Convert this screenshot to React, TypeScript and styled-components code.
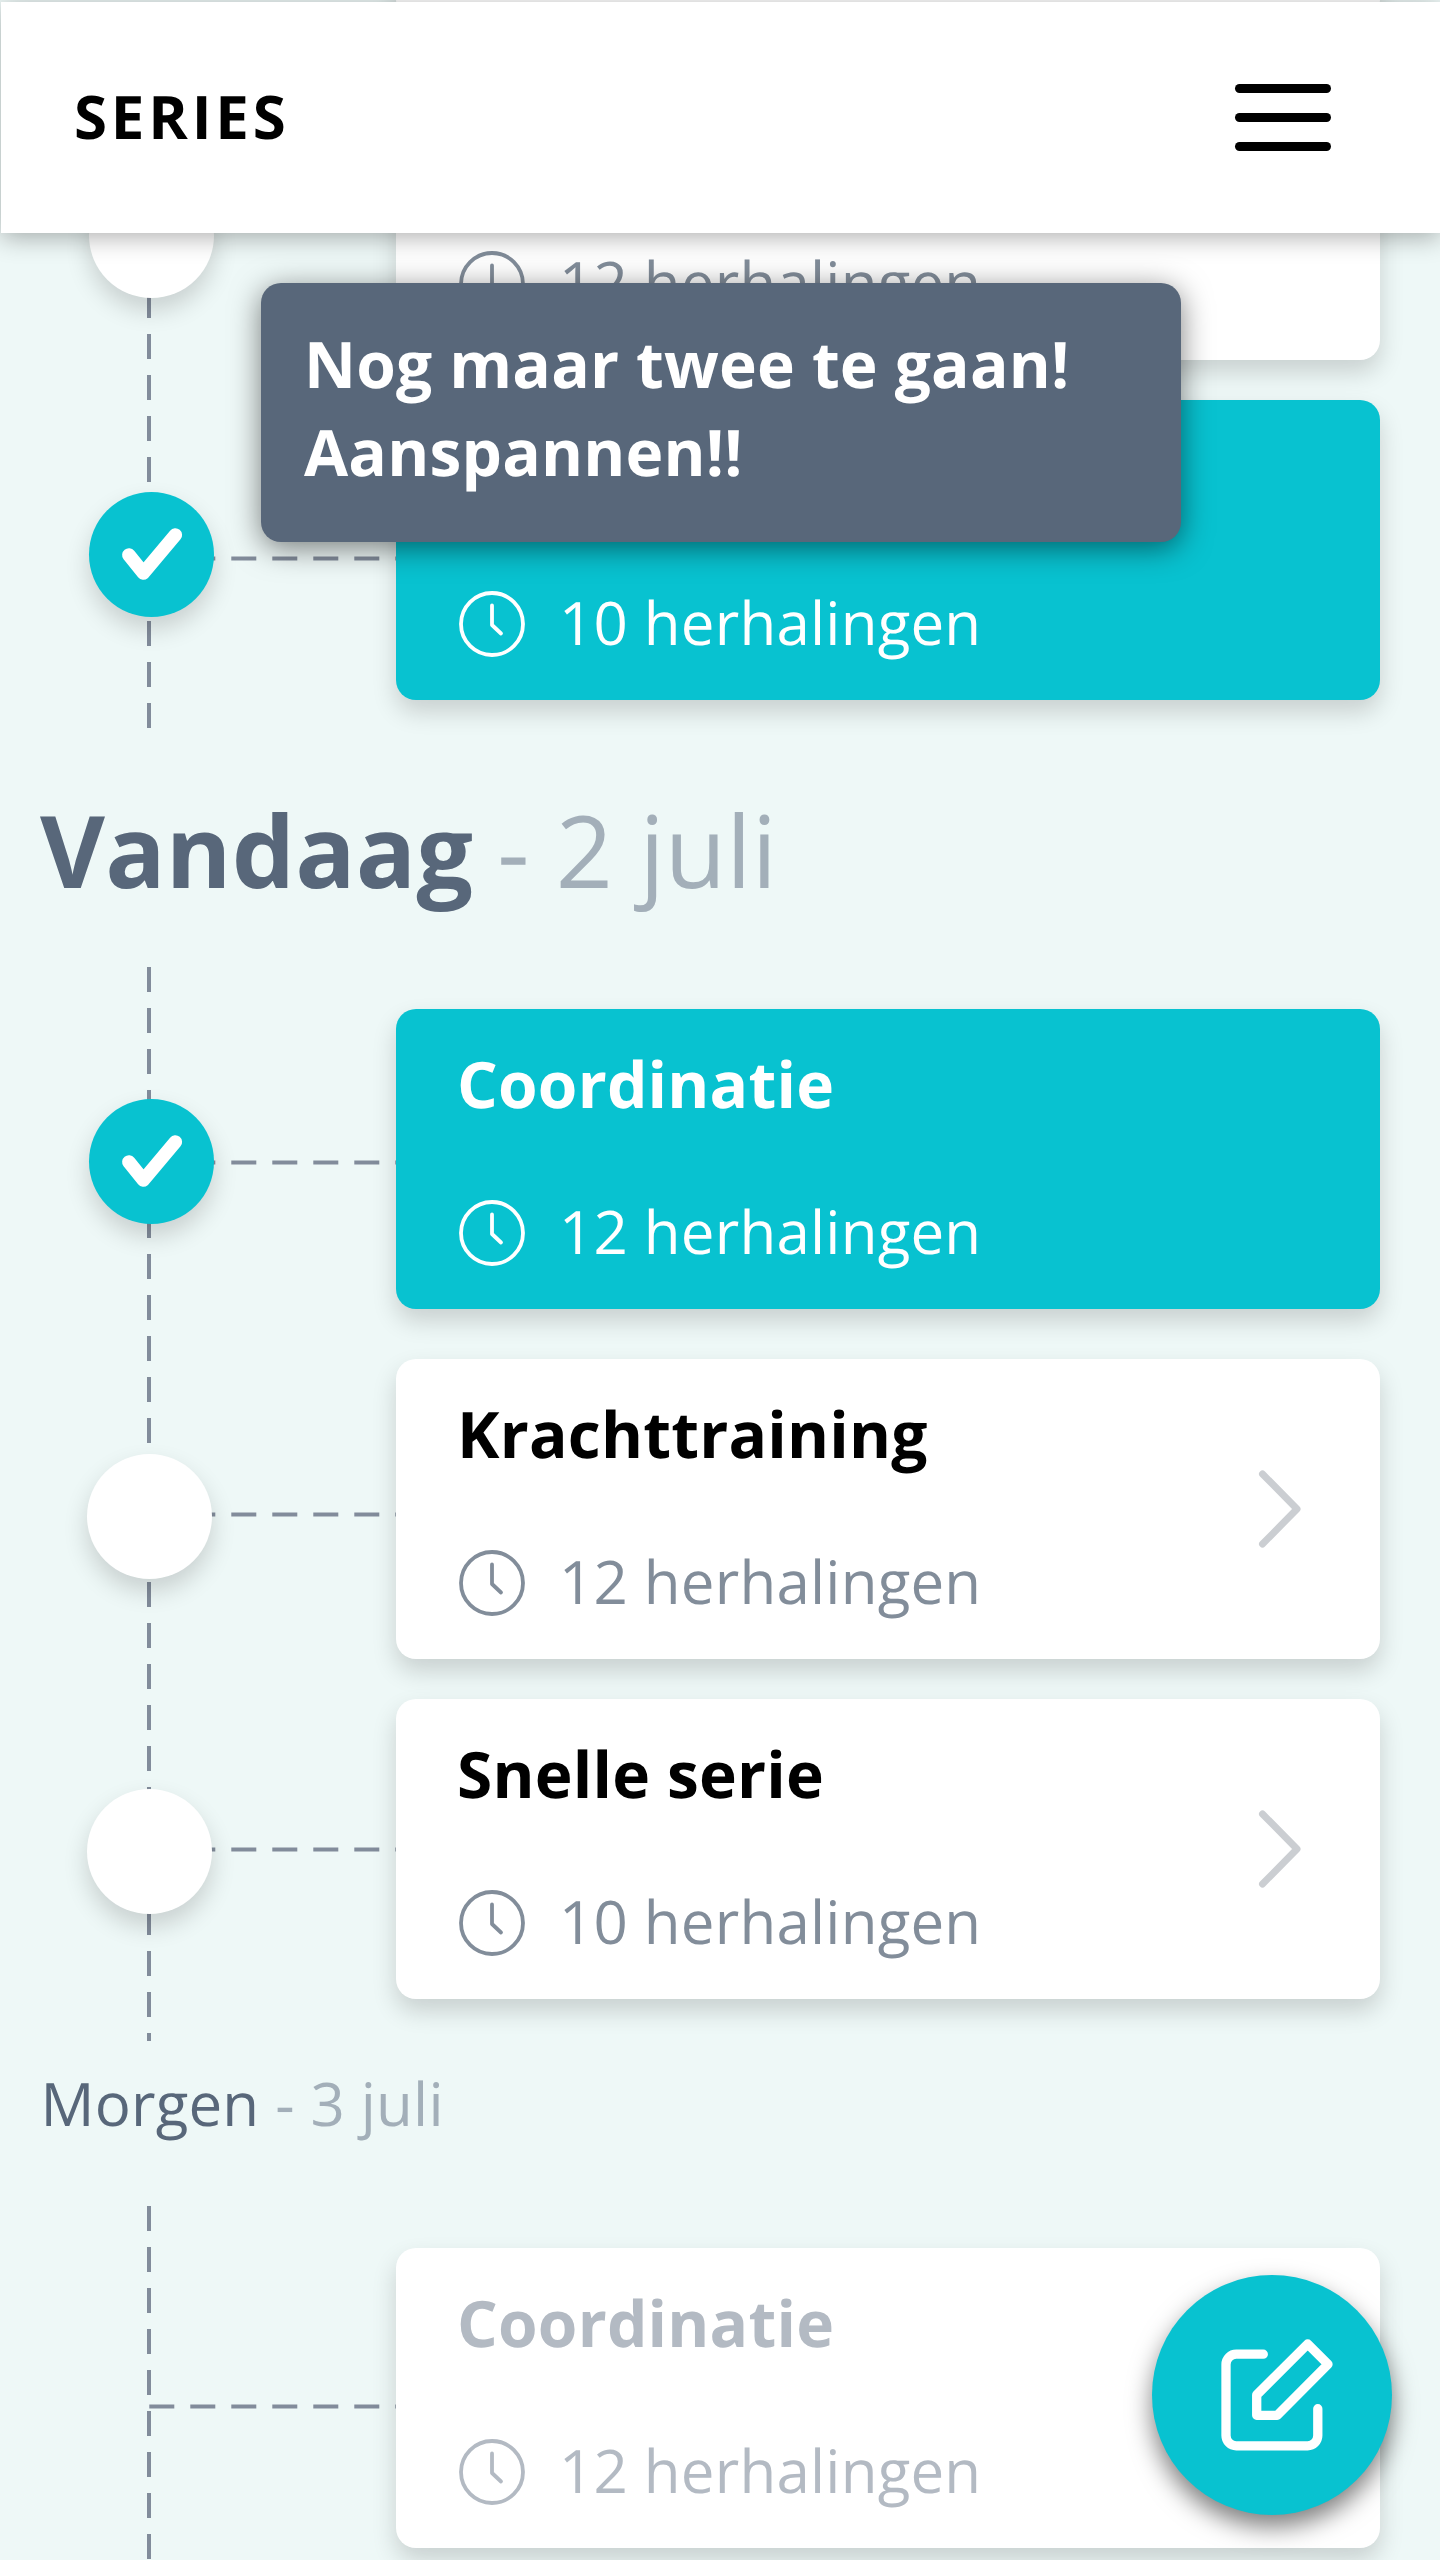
import React from "react";
import styled, { createGlobalStyle } from "styled-components";

const colors = {
  page: "#eef8f7",
  accent: "#08c2d0",
  slate: "#58677a",
  line: "#828c9b",
  text: "#828d9a",
  faded: "#b3bac3",
  date: "#a3afb9",
  chevron: "#cbced2",
};

type Tone = "done" | "open" | "future";

const GlobalStyle = createGlobalStyle`
  body {
    margin: 0;
    background: ${colors.page};
  }
`;

const Screen = styled.div`
  position: relative;
  width: 1440px;
  height: 2560px;
  overflow: hidden;
  background: ${colors.page};
  font-family: "Open Sans", "Noto Sans", sans-serif;
  letter-spacing: 0.2px;
  text-rendering: geometricPrecision;
`;

const Header = styled.header`
  position: absolute;
  z-index: 2;
  top: 2px;
  left: 1px;
  right: 0;
  box-sizing: border-box;
  height: 231px;
  padding: 0 109px 0 73px;
  display: flex;
  align-items: center;
  justify-content: space-between;
  background: #fff;
  box-shadow: 0 4px 24px rgba(0, 0, 0, 0.32);
`;

const ScreenTitle = styled.h1`
  margin: 0 0 3px;
  font-size: 60px;
  line-height: 82px;
  font-weight: 700;
  letter-spacing: 3.8px;
  color: #000;
`;

const MenuButton = styled.button`
  display: flex;
  flex-direction: column;
  gap: 19.6px;
  width: 96px;
  padding: 0;
  border: 0;
  background: none;
`;

const MenuBar = styled.span`
  height: 9.4px;
  border-radius: 5px;
  background: #000;
`;

const Toast = styled.div`
  position: absolute;
  z-index: 3;
  top: 283px;
  left: 261px;
  box-sizing: border-box;
  width: 920px;
  height: 259px;
  padding: 37px 43px;
  border-radius: 20px;
  background: ${colors.slate};
  box-shadow: 0 6px 30px rgba(0, 0, 0, 0.5);
  color: #fff;
  font-size: 64px;
  line-height: 88px;
  font-weight: 700;
`;

const Fab = styled.button`
  position: absolute;
  z-index: 3;
  top: 2275px;
  left: 1152px;
  width: 240px;
  height: 240px;
  padding: 0;
  border: 0;
  border-radius: 50%;
  background: ${colors.accent};
  box-shadow: 0 12px 24px rgba(0, 0, 0, 0.5);

  svg {
    display: block;
  }
`;

/* The list is scrolled: its first card lies mostly above the screen. */
const Schedule = styled.main`
  display: flex;
  flex-direction: column;
  margin-top: -322px;
`;

const Timeline = styled.section<{ $bottom: number }>`
  display: flex;
  flex-direction: column;
  padding: 42px 60px ${(p) => p.$bottom}px 0;
  background: repeating-linear-gradient(
      to bottom,
      ${colors.line} 0 25px,
      transparent 25px 41px
    )
    147px 0 / 4px 100% no-repeat;
`;

const DayHeading = styled.h2<{ $today?: boolean }>`
  box-sizing: border-box;
  height: ${(p) => (p.$today ? 239 : 165)}px;
  margin: 0;
  padding: ${(p) => (p.$today ? "54px 0 0 40px" : "21px 0 0 40.5px")};
  font-size: ${(p) => (p.$today ? 100 : 60)}px;
  line-height: ${(p) => (p.$today ? 136 : 82)}px;
  font-weight: ${(p) => (p.$today ? 700 : 400)};
  color: ${colors.slate};
`;

const DayDate = styled.span<{ $today?: boolean }>`
  margin-left: ${(p) => (p.$today ? -2 : 0)}px;
  font-weight: 400;
  color: ${colors.date};
`;

const Row = styled.div<{ $gap: number }>`
  display: grid;
  grid-template-columns: 396px 1fr;
  margin-top: ${(p) => p.$gap}px;
`;

const Rail = styled.div`
  position: relative;
`;

const Connector = styled.svg<{ $top: number }>`
  position: absolute;
  top: ${(p) => p.$top}px;
  left: 149px;
  display: block;
`;

const Marker = styled.div<{ $tone: Tone; $top: number; $left: number }>`
  position: relative;
  width: 125px;
  height: 125px;
  margin: ${(p) => p.$top}px 0 0 ${(p) => p.$left}px;
  border-radius: 50%;
  background: ${(p) => (p.$tone === "done" ? colors.accent : "#fff")};
  box-shadow: 0 12px 24px rgba(0, 0, 0, 0.16);

  svg {
    display: block;
  }
`;

const Card = styled.article<{ $tone: Tone }>`
  position: relative;
  box-sizing: border-box;
  height: 300px;
  padding: 31px 79px 0 60px;
  display: grid;
  grid-template-columns: 1fr auto;
  align-content: start;
  border-radius: 20px;
  background: ${(p) => (p.$tone === "done" ? colors.accent : "#fff")};
  box-shadow: 0 12px 24px rgba(0, 0, 0, 0.16);
  color: ${(p) =>
    p.$tone === "done" ? "#fff" : p.$tone === "future" ? colors.faded : colors.text};
`;

const CardBody = styled.div`
  display: flex;
  flex-direction: column;
  gap: 63px;
`;

const CardTitle = styled.h3<{ $tone: Tone }>`
  height: 87px;
  margin: 0 0 0 1px;
  font-size: 64px;
  line-height: 87px;
  font-weight: 700;
  color: ${(p) => (p.$tone === "open" ? "#000" : "inherit")};
`;

const Repeats = styled.div`
  display: flex;
  align-items: center;
  gap: 34px;
  padding-left: 3px;
  font-size: 60px;
  line-height: 82px;

  svg {
    display: block;
    margin-top: 4px;
  }
`;

const ChevronSlot = styled.div`
  padding-top: 79px;

  svg {
    display: block;
  }
`;

const CheckIcon = () => (
  <svg width="125" height="125" viewBox="0 0 125 125" fill="none">
    <path
      d="M39.9 63 L54.4 81 L86.3 43"
      stroke="#fff"
      strokeWidth="13.6"
      strokeLinecap="round"
      strokeLinejoin="round"
    />
  </svg>
);

const ClockIcon = () => (
  <svg
    width="66"
    height="66"
    viewBox="0 0 66 66"
    fill="none"
    stroke="currentColor"
    strokeWidth="3.8"
    strokeLinecap="round"
    strokeLinejoin="round"
  >
    <circle cx="33" cy="33" r="31" />
    <path d="M33 14.5 V34 L42 42.5" />
  </svg>
);

const ChevronIcon = () => (
  <svg width="44" height="80" viewBox="0 0 44 80" fill="none">
    <path
      d="M5.5 5 L40 40 L5.5 75"
      stroke={colors.chevron}
      strokeWidth="7"
      strokeLinecap="round"
      strokeLinejoin="round"
    />
  </svg>
);

const EditIcon = () => (
  <svg
    width="240"
    height="240"
    viewBox="0 0 240 240"
    fill="none"
    stroke="#fff"
    strokeWidth="9.3"
    strokeLinecap="round"
    strokeLinejoin="round"
  >
    <path d="M111.3 79.2 H84.2 A10.2 10.2 0 0 0 74 89.4 V160.6 A10.2 10.2 0 0 0 84.2 170.8 H155.6 A10.2 10.2 0 0 0 165.8 160.6 V133.7" />
    <path d="M155.7 69 L176 89.3 L125.3 140.3 H104.7 V119.9 Z" />
  </svg>
);

interface Serie {
  id: number;
  title?: string;
  repeats?: number;
  tone: Tone;
  gap: number;
  marker?: { top: number; left: number };
  connector: number;
  chevron?: boolean;
}

const SerieRow = ({ title, repeats, tone, gap, marker, connector, chevron }: Serie) => (
  <Row $gap={gap}>
    <Rail>
      <Connector $top={connector} width="247" height="6">
        <line
          x1="0.3"
          x2="247"
          y1="2.5"
          y2="2.5"
          stroke={colors.line}
          strokeWidth="4"
          strokeDasharray="25 16"
        />
      </Connector>
      {marker && (
        <Marker $tone={tone} $top={marker.top} $left={marker.left}>
          {tone === "done" && <CheckIcon />}
        </Marker>
      )}
    </Rail>
    <Card $tone={tone}>
      <CardBody>
        <CardTitle $tone={tone}>{title}</CardTitle>
        {repeats && (
          <Repeats>
            <ClockIcon />
            <span>{repeats} herhalingen</span>
          </Repeats>
        )}
      </CardBody>
      {chevron && (
        <ChevronSlot>
          <ChevronIcon />
        </ChevronSlot>
      )}
    </Card>
  </Row>
);

const yesterday: Serie[] = [
  { id: 1, tone: "open", gap: 0, connector: 156 },
  { id: 2, repeats: 12, tone: "open", gap: 40, marker: { top: 113, left: 89 }, connector: 156 },
  { id: 3, repeats: 10, tone: "done", gap: 40, marker: { top: 92, left: 89 }, connector: 156 },
];

const today: Serie[] = [
  { id: 4, title: "Coordinatie", repeats: 12, tone: "done", gap: 0, marker: { top: 90, left: 89 }, connector: 151 },
  { id: 5, title: "Krachttraining", repeats: 12, tone: "open", gap: 50, marker: { top: 95, left: 87 }, connector: 153, chevron: true },
  { id: 6, title: "Snelle serie", repeats: 10, tone: "open", gap: 40, marker: { top: 90, left: 87 }, connector: 148, chevron: true },
];

const tomorrow: Serie[] = [
  { id: 7, title: "Coordinatie", repeats: 12, tone: "future", gap: 0, connector: 156 },
];

export default function App() {
  return (
    <>
      <GlobalStyle />
      <Screen>
        <Header>
          <ScreenTitle>SERIES</ScreenTitle>
          <MenuButton aria-label="Menu">
            <MenuBar />
            <MenuBar />
            <MenuBar />
          </MenuButton>
        </Header>

        <Schedule>
          <Timeline $bottom={28}>
            {yesterday.map((serie) => (
              <SerieRow key={serie.id} {...serie} />
            ))}
          </Timeline>

          <DayHeading $today>
            Vandaag <DayDate $today>- 2 juli</DayDate>
          </DayHeading>
          <Timeline $bottom={42}>
            {today.map((serie) => (
              <SerieRow key={serie.id} {...serie} />
            ))}
          </Timeline>

          <DayHeading>
            Morgen <DayDate>- 3 juli</DayDate>
          </DayHeading>
          <Timeline $bottom={42}>
            {tomorrow.map((serie) => (
              <SerieRow key={serie.id} {...serie} />
            ))}
          </Timeline>
        </Schedule>

        <Toast>
          Nog maar twee te gaan!
          <br />
          Aanspannen!!
        </Toast>
        <Fab aria-label="Bewerken">
          <EditIcon />
        </Fab>
      </Screen>
    </>
  );
}
